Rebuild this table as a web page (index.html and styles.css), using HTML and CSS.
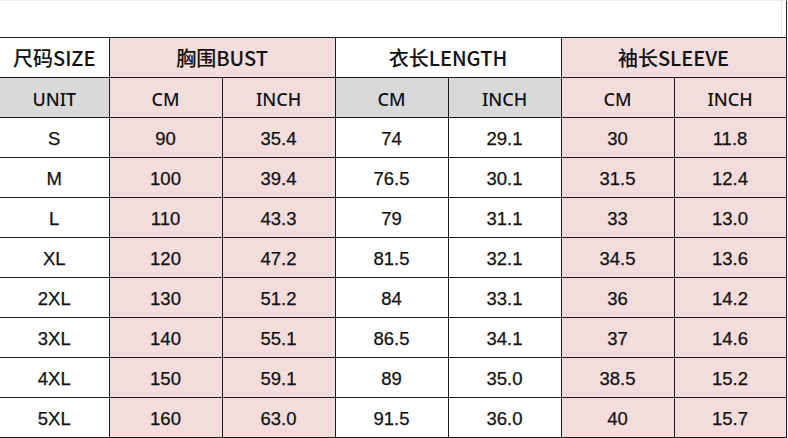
FILE: index.html
```html
<!DOCTYPE html>
<html>
<head>
<meta charset="utf-8">
<link rel="stylesheet" href="styles.css">
</head>
<body>
<div class="page">
  <div class="top"><div class="top-inner"></div></div>
  <table class="chart">
    <colgroup>
      <col class="c-first"><col><col><col><col><col><col class="c-last">
    </colgroup>
    <tr class="head1">
      <th class="white">尺码SIZE</th>
      <th class="pink" colspan="2">胸围BUST</th>
      <th class="white" colspan="2">衣长LENGTH</th>
      <th class="pink" colspan="2">袖长SLEEVE</th>
    </tr>
    <tr class="head2">
      <th class="gray">UNIT</th>
      <th class="pink">CM</th><th class="pink">INCH</th>
      <th class="gray">CM</th><th class="gray">INCH</th>
      <th class="pink">CM</th><th class="pink">INCH</th>
    </tr>
    <tr><td>S</td><td class="pink">90</td><td class="pink">35.4</td><td>74</td><td>29.1</td><td class="pink">30</td><td class="pink">11.8</td></tr>
    <tr><td>M</td><td class="pink">100</td><td class="pink">39.4</td><td>76.5</td><td>30.1</td><td class="pink">31.5</td><td class="pink">12.4</td></tr>
    <tr><td>L</td><td class="pink">110</td><td class="pink">43.3</td><td>79</td><td>31.1</td><td class="pink">33</td><td class="pink">13.0</td></tr>
    <tr><td>XL</td><td class="pink">120</td><td class="pink">47.2</td><td>81.5</td><td>32.1</td><td class="pink">34.5</td><td class="pink">13.6</td></tr>
    <tr><td>2XL</td><td class="pink">130</td><td class="pink">51.2</td><td>84</td><td>33.1</td><td class="pink">36</td><td class="pink">14.2</td></tr>
    <tr><td>3XL</td><td class="pink">140</td><td class="pink">55.1</td><td>86.5</td><td>34.1</td><td class="pink">37</td><td class="pink">14.6</td></tr>
    <tr><td>4XL</td><td class="pink">150</td><td class="pink">59.1</td><td>89</td><td>35.0</td><td class="pink">38.5</td><td class="pink">15.2</td></tr>
    <tr><td>5XL</td><td class="pink">160</td><td class="pink">63.0</td><td>91.5</td><td>36.0</td><td class="pink">40</td><td class="pink">15.7</td></tr>
  </table>
</div>
</body>
</html>
```
FILE: styles.css
```css
html, body {
  margin: 0;
  padding: 0;
  background: #ffffff;
}
.page {
  width: 788px;
  height: 438px;
  overflow: hidden;
}
.top {
  width: 786px;
  height: 36px;
  border-top: 1px solid #ececec;
  border-right: 1px solid #222;
  box-sizing: content-box;
}
.top-inner {
  width: 782px;
  height: 36px;
  border-right: 1px solid #e6e6e6;
  box-sizing: border-box;
}
.chart {
  border-collapse: collapse;
  table-layout: fixed;
  width: 786px;
  color: #111111;
}
.chart col { width: 113px; }
.chart col.c-first { width: 109px; }
.chart col.c-last { width: 112px; }
.chart th, .chart td {
  height: 40px;
  padding: 0;
  text-align: center;
  vertical-align: middle;
  border: 1px solid #1a1a1a;
  box-sizing: border-box;
}
.chart tr > :first-child { border-left: none; }
.chart th {
  font-family: "Noto Sans CJK SC", "Noto Sans", sans-serif;
  font-weight: 500;
}
.head1 th { font-size: 20px; }
.head2 th {
  font-family: "Noto Sans", "Noto Sans CJK SC", sans-serif;
  font-size: 18px;
  font-weight: 500;
  padding-top: 2px;
}
.chart td {
  font-family: "Liberation Sans", Arial, sans-serif;
  font-size: 18.5px;
  padding-top: 3px;
  -webkit-text-stroke: 0.25px #111111;
}
.pink { background: #f2dcdc; }
.gray { background: #d9d9d9; }
.white { background: #ffffff; }
```
